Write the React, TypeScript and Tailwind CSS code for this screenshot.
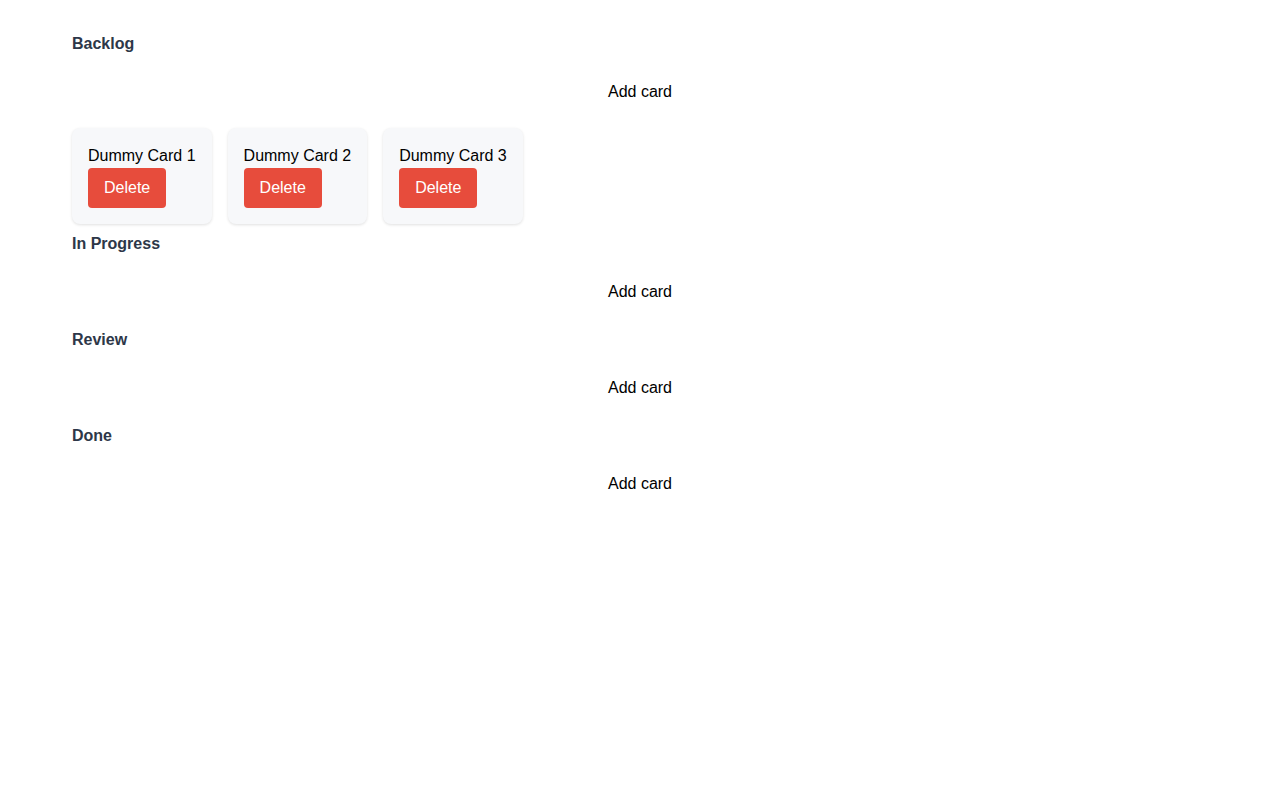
const columns = [
  { title: 'Backlog', cards: ['Dummy Card 1', 'Dummy Card 2', 'Dummy Card 3'] },
  { title: 'In Progress', cards: [] as string[] },
  { title: 'Review', cards: [] as string[] },
  { title: 'Done', cards: [] as string[] },
];

export default function App() {
  return (
    <div className="min-h-screen w-full bg-white pt-8 px-[72px] text-black font-['Liberation_Sans',Arial,sans-serif] text-base">
      {columns.map((col) => (
        <section key={col.title} className={col.cards.length ? 'pb-2' : 'pb-6'}>
          <h2 className="font-bold leading-6 text-[#2d3748]">{col.title}</h2>

          <button className="block w-full mt-6 leading-6 text-center bg-transparent">
            Add card
          </button>

          {col.cards.length > 0 && (
            <div className="mt-6 flex gap-4">
              {col.cards.map((card) => (
                <div
                  key={card}
                  className="rounded-lg bg-[#f7f8fa] p-4 shadow-[0_1px_3px_rgba(0,0,0,0.12)]"
                >
                  <p className="leading-6 whitespace-nowrap">{card}</p>
                  <button className="h-10 px-4 rounded bg-[#e74c3c] text-white leading-6">
                    Delete
                  </button>
                </div>
              ))}
            </div>
          )}
        </section>
      ))}
    </div>
  );
}
